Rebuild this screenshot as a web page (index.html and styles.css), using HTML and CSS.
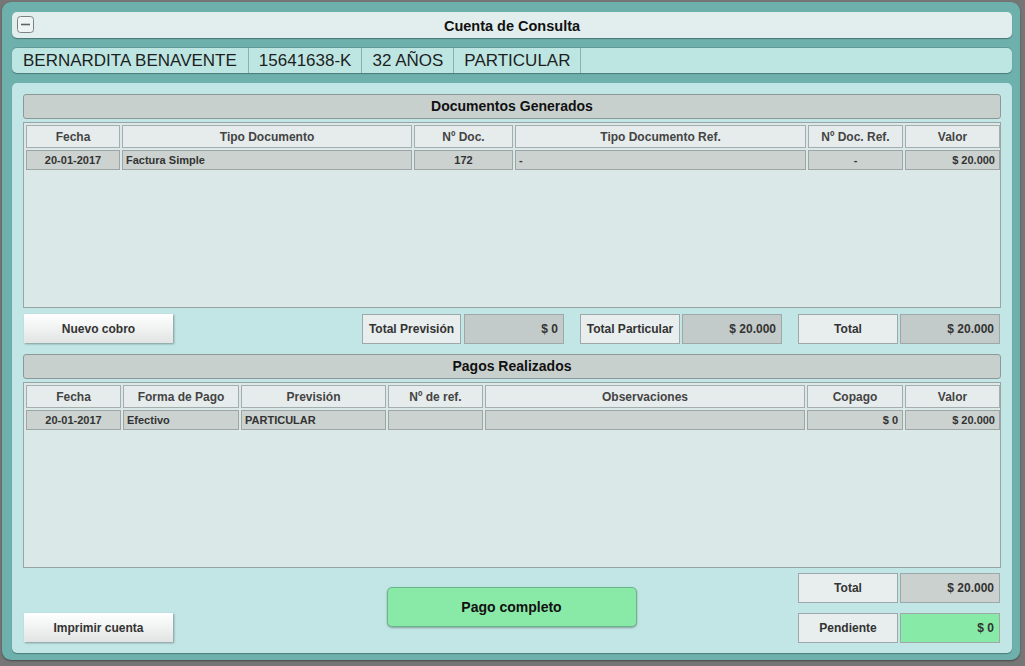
FILE: index.html
```html
<!DOCTYPE html>
<html lang="es">
<head>
<meta charset="utf-8">
<title>Cuenta de Consulta</title>
<link rel="stylesheet" href="styles.css">
</head>
<body>
<div class="modal">
  <div class="titlebar">
    <span class="min-icon">
      <svg width="17" height="17" viewBox="0 0 17 17"><rect x="0.5" y="0.5" width="16" height="16" rx="3" fill="#eef3f3" stroke="#7c8282"/><line x1="4" y1="8.5" x2="13" y2="8.5" stroke="#5f6565" stroke-width="1.6"/></svg>
    </span>
    <span class="title">Cuenta de Consulta</span>
  </div>
  <div class="patient">
    <span class="pcell first">BERNARDITA BENAVENTE</span>
    <span class="pcell">15641638-K</span>
    <span class="pcell">32 AÑOS</span>
    <span class="pcell">PARTICULAR</span>
  </div>
  <div class="main">
    <div class="sechead">Documentos Generados</div>
    <div class="tbl tbl1">
      <div class="row head">
        <div class="c">Fecha</div>
        <div class="c">Tipo Documento</div>
        <div class="c">Nº Doc.</div>
        <div class="c">Tipo Documento Ref.</div>
        <div class="c">Nº Doc. Ref.</div>
        <div class="c">Valor</div>
      </div>
      <div class="row data">
        <div class="c">20-01-2017</div>
        <div class="c l">Factura Simple</div>
        <div class="c">172</div>
        <div class="c l">-</div>
        <div class="c">-</div>
        <div class="c r">$ 20.000</div>
      </div>
    </div>
    <div class="totals">
      <button class="btn">Nuevo cobro</button>
      <div class="tgroups">
        <div class="tgroup"><div class="lbl">Total Previsión</div><div class="val">$ 0</div></div>
        <div class="tgroup"><div class="lbl">Total Particular</div><div class="val">$ 20.000</div></div>
        <div class="tgroup"><div class="lbl">Total</div><div class="val">$ 20.000</div></div>
      </div>
    </div>
    <div class="sechead sec2">Pagos Realizados</div>
    <div class="tbl tbl2">
      <div class="row head">
        <div class="c">Fecha</div>
        <div class="c">Forma de Pago</div>
        <div class="c">Previsión</div>
        <div class="c">Nº de ref.</div>
        <div class="c">Observaciones</div>
        <div class="c">Copago</div>
        <div class="c">Valor</div>
      </div>
      <div class="row data">
        <div class="c">20-01-2017</div>
        <div class="c l">Efectivo</div>
        <div class="c l">PARTICULAR</div>
        <div class="c"></div>
        <div class="c"></div>
        <div class="c r">$ 0</div>
        <div class="c r">$ 20.000</div>
      </div>
    </div>
    <div class="bottom">
      <button class="btn print">Imprimir cuenta</button>
      <div class="center"><button class="pago">Pago completo</button></div>
      <div class="rcol">
        <div class="tgroup"><div class="lbl">Total</div><div class="val light">$ 20.000</div></div>
        <div class="tgroup"><div class="lbl">Pendiente</div><div class="val green">$ 0</div></div>
      </div>
    </div>
  </div>
</div>
</body>
</html>
```

FILE: styles.css
```css
* { box-sizing: border-box; }
html, body { margin: 0; padding: 0; }
body {
  width: 1025px;
  height: 666px;
  overflow: hidden;
  background: #767676;
  font-family: "Liberation Sans", Arial, sans-serif;
  color: #222;
  padding: 2px 0 0 2px;
}
.modal {
  width: 1018px;
  height: 658px;
  background: #6eb0ac;
  border-radius: 9px;
  padding: 10px 8px 8px 10px;
  display: flex;
  flex-direction: column;
  gap: 10px;
  box-shadow: 0 1px 2px rgba(0,0,0,.4);
}
.titlebar {
  height: 26px;
  flex: none;
  background: #e1eeed;
  border-radius: 5px;
  box-shadow: 0 1px 1px rgba(0,0,0,.35);
  position: relative;
  display: flex;
  align-items: center;
  justify-content: center;
  padding-top: 1px;
}
.min-icon {
  position: absolute;
  left: 5px;
  top: 4px;
  width: 17px;
  height: 17px;
  line-height: 0;
}
.title {
  font-weight: bold;
  font-size: 14.5px;
  color: #111;
}
.patient {
  height: 25px;
  flex: none;
  background: #bde6e2;
  border-radius: 5px;
  box-shadow: 0 1px 1px rgba(0,0,0,.3), 0 -1px 0 rgba(0,0,0,.12);
  display: flex;
  align-items: stretch;
  padding-left: 1px;
}
.pcell {
  font-size: 17px;
  padding: 0 10px;
  border-right: 1px solid #86b2ae;
  display: flex;
  align-items: center;
  color: #1e1e1e;
}
.pcell.first { padding-right: 11px; }
.main {
  height: 570px;
  flex: none;
  background: #c1e6e5;
  border-radius: 5px;
  box-shadow: 0 1px 1px rgba(0,0,0,.3);
  padding: 11px 11px 0 11px;
  display: flex;
  flex-direction: column;
}
.sechead {
  height: 25px;
  flex: none;
  background: #c8d0ce;
  border: 1px solid #8d9896;
  border-radius: 3px;
  font-weight: bold;
  font-size: 14px;
  color: #111;
  display: flex;
  align-items: center;
  justify-content: center;
  padding-bottom: 1px;
}
.sec2 { margin-top: 10px; }
.tbl {
  margin-top: 3px;
  height: 186px;
  flex: none;
  background: #dae8e7;
  border: 1px solid #9aa4a3;
  padding: 2px 1px 2px 2px;
  display: flex;
  flex-direction: column;
  gap: 2px;
}
.row { display: grid; gap: 2px; }
.tbl1 .row { grid-template-columns: 94px 290px 99px 291px 95px 95px; }
.tbl2 .row { grid-template-columns: 95px 116px 145px 95px 320px 96px 95px; }
.row.head { height: 23px; }
.row.data { height: 20px; }
.c {
  display: flex;
  align-items: center;
  justify-content: center;
  white-space: nowrap;
  overflow: hidden;
}
.head .c {
  background: #e6ecec;
  border: 1px solid #a5aeae;
  font-weight: bold;
  font-size: 12px;
  color: #444;
}
.data .c {
  background: #cbd2cf;
  border: 1px solid #9da6a4;
  font-weight: bold;
  font-size: 11px;
  color: #333;
}
.data .c.l { justify-content: flex-start; padding-left: 3px; }
.data .c.r { justify-content: flex-end; padding-right: 4px; }
.totals {
  margin-top: 6px;
  height: 30px;
  flex: none;
  display: flex;
  align-items: stretch;
  justify-content: space-between;
  padding-right: 1px;
}
.btn {
  width: 149px;
  height: 29px;
  margin: 0 0 0 1px;
  border: none;
  background: linear-gradient(#ffffff, #e2e4e4);
  box-shadow: 1px 1px 2px rgba(0,0,0,.35);
  font-family: inherit;
  font-weight: bold;
  font-size: 12px;
  color: #333;
  padding: 0;
}
.tgroups { display: flex; gap: 16px; }
.tgroup { display: flex; gap: 2px; height: 30px; }
.lbl, .val {
  width: 100px;
  border: 1px solid #9ea8a7;
  font-weight: bold;
  font-size: 12px;
  color: #333;
  display: flex;
  align-items: center;
}
.lbl { background: #e8eeee; justify-content: center; }
.tgroups .tgroup:first-child .lbl { width: 99px; }
.tgroups .tgroup:first-child { gap: 3px; }
.val { background: #c3cbca; justify-content: flex-end; padding-right: 5px; }
.val.light { background: #cbd1ce; }
.val.green { background: #87eaa7; }
.bottom {
  margin-top: 5px;
  height: 70px;
  flex: none;
  display: grid;
  grid-template-columns: 1fr 250px 1fr;
  padding-right: 1px;
}
.print { align-self: end; margin: 0 0 1px 1px; }
.center { display: flex; align-items: center; justify-content: center; padding-bottom: 3px; }
.pago {
  width: 250px;
  height: 40px;
  background: #89eaa8;
  border: 1px solid #6cb588;
  border-radius: 5px;
  box-shadow: 0 1px 2px rgba(0,0,0,.3);
  font-family: inherit;
  font-weight: bold;
  font-size: 14px;
  color: #111;
}
.rcol {
  display: flex;
  flex-direction: column;
  align-items: flex-end;
  gap: 10px;
}
```
